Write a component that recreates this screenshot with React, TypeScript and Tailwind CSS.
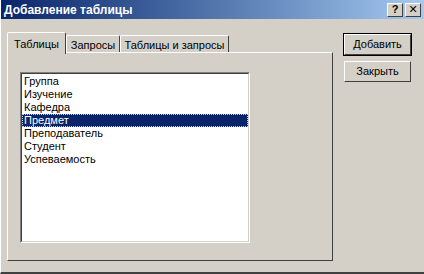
const items = ['Группа', 'Изучение', 'Кафедра', 'Предмет', 'Преподаватель', 'Студент', 'Успеваемость'];
const selected = 3;

function TitleButton({ children }: { children: React.ReactNode }) {
  return (
    <div className="w-[16px] h-[14px] bg-[#d4d0c8] border-t border-l border-white border-r border-b border-r-[#404040] border-b-[#404040] flex items-center justify-center text-[11px] font-bold leading-none text-black">
      {children}
    </div>
  );
}

function Button({ label, isDefault }: { label: string; isDefault?: boolean }) {
  return (
    <div className={isDefault ? 'border border-black' : 'border border-transparent'}>
      <div className="h-[21px] w-[67px] bg-[#d4d0c8] border-t border-l border-white border-r border-b border-r-[#404040] border-b-[#404040] flex items-center justify-center text-[11px] text-black">
        {label}
      </div>
    </div>
  );
}

export default function App() {
  return (
    <div
      className="w-[424px] h-[274px] bg-[#d4d0c8] flex flex-col border-b-2 border-b-[#404040] border-l border-l-white overflow-hidden"
      style={{ fontFamily: '"Liberation Sans", "DejaVu Sans", sans-serif' }}
    >
      <div className="h-[19px] shrink-0 flex items-center pl-[3px] pr-[3px] bg-gradient-to-r from-[#0a246a] to-[#a6caf0]">
        <span className="text-white font-bold text-[12px] flex-1">Добавление таблицы</span>
        <div className="flex gap-[2px]">
          <TitleButton>?</TitleButton>
          <TitleButton>✕</TitleButton>
        </div>
      </div>

      <div className="flex flex-1 pt-[13px] pl-[6px]">
        <div className="flex flex-col w-[326px]">
          <div className="flex items-end h-[20px] text-[11px] text-black">
            <div className="relative z-10 -mb-[2px] h-[22px] w-[59px] bg-[#d4d0c8] border-t border-l border-white border-r border-r-[#404040] rounded-t-[2px] flex items-start justify-center pt-[3px]">
              Таблицы
            </div>
            <div className="h-[17px] w-[54px] bg-[#d4d0c8] border-t border-l border-white border-r border-r-[#404040] rounded-t-[2px] flex items-start justify-center pt-[1px]">
              Запросы
            </div>
            <div className="h-[17px] w-[109px] bg-[#d4d0c8] border-t border-l border-white border-r border-r-[#404040] rounded-t-[2px] flex items-start justify-center pt-[1px]">
              Таблицы и запросы
            </div>
          </div>
          <div className="h-[209px] border-t border-l border-white border-r border-b border-r-[#404040] border-b-[#404040] pt-[19px] pl-[12px]">
            <div className="w-[230px] h-[171px] bg-white border-t border-l border-[#808080] border-r border-b border-r-white border-b-white">
              <div className="w-full h-full border-t border-l border-[#404040] border-r border-b border-r-[#d4d0c8] border-b-[#d4d0c8] pt-[1px]">
                {items.map((it, i) => (
                  <div
                    key={it}
                    className={
                      i === selected
                        ? 'h-[13px] leading-[13px] text-[11px] pl-[2px] bg-[#0a246a] text-white outline outline-1 outline-dotted outline-[#d4d0c8] -outline-offset-1'
                        : 'h-[13px] leading-[13px] text-[11px] pl-[2px] text-black'
                    }
                  >
                    {it}
                  </div>
                ))}
              </div>
            </div>
          </div>
        </div>

        <div className="flex flex-col gap-[4px] ml-[10px] pt-[1px]">
          <Button label="Добавить" isDefault />
          <Button label="Закрыть" />
        </div>
      </div>
    </div>
  );
}
